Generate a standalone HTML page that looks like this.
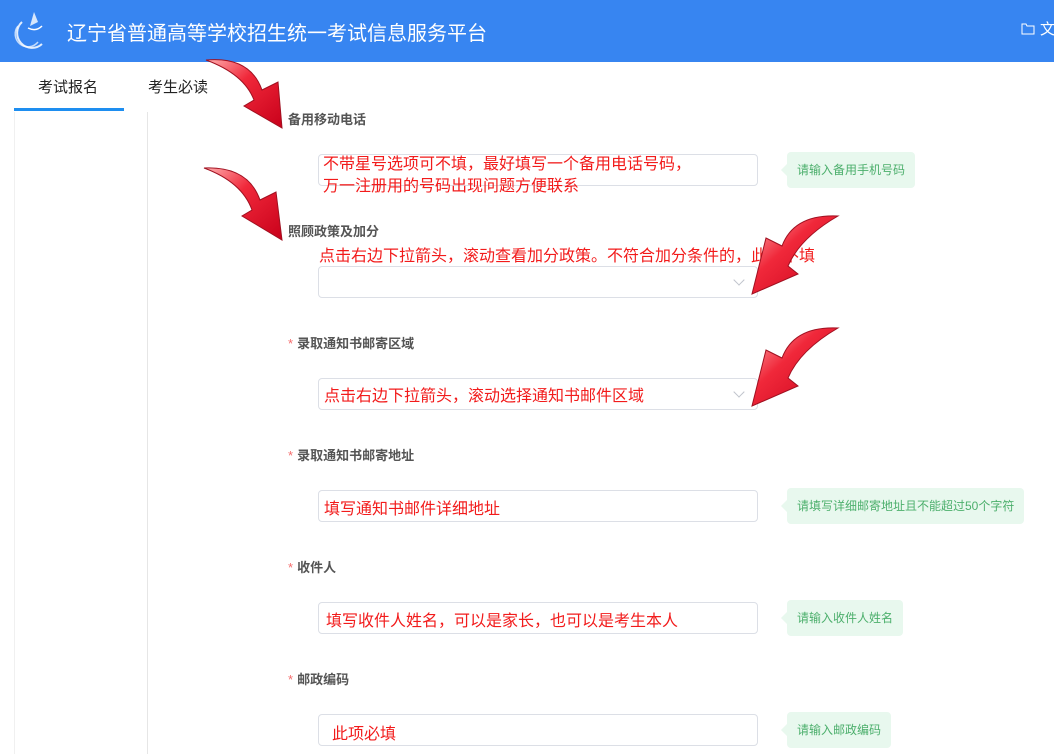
<!DOCTYPE html>
<html><head><meta charset="utf-8"><style>
*{margin:0;padding:0;box-sizing:border-box}
body{width:1054px;height:754px;overflow:hidden;background:#fff;font-family:"Liberation Sans","Noto Sans CJK SC",sans-serif;position:relative}
.hd{position:absolute;left:0;top:0;width:1054px;height:62px;background:#3785f1}
.title{position:absolute;left:67px;top:17px;color:#fff;font-size:20px}
.tab{position:absolute;top:76px;font-size:15px;color:#222}
.ul{position:absolute;left:14px;top:108px;width:110px;height:3px;background:#1e8ef0}
.vl{position:absolute;left:147px;top:112px;width:1px;height:642px;background:#e6e6e6}
.vl2{position:absolute;left:14px;top:112px;width:1px;height:642px;background:#f0f0f0}
.lab{position:absolute;left:288px;font-size:13px;color:#555;font-weight:bold}
.lab b{color:#f56c6c;font-weight:normal;margin-right:4px}
.inp{position:absolute;left:318px;width:440px;height:32px;border:1px solid #dcdfe6;border-radius:4px;background:#fff}
.red{position:absolute;color:#f21b1b;font-size:16px;white-space:nowrap}
.tip{position:absolute;left:787px;height:36px;background:#e8f8ee;color:#4caf6c;font-size:12px;line-height:36px;padding:0 10px;border-radius:4px}
.tip:before{content:"";position:absolute;left:-6px;top:12px;border:6px solid transparent;border-left:0;border-right-color:#e8f8ee}
.chev{position:absolute;left:735px;width:8px;height:8px;border-right:1px solid #c0c4cc;border-bottom:1px solid #c0c4cc;transform:rotate(45deg)}
</style></head><body>
<div class="hd">
<svg style="position:absolute;left:8px;top:8px" width="40" height="44" viewBox="0 0 40 44"><path d="M14 14 A13 13 0 1 0 34 36" stroke="#fff" stroke-width="2" fill="none" opacity=".85"/><path d="M10 18 A10 10 0 1 0 30 34" stroke="#fff" stroke-width="1.5" fill="none" opacity=".7"/><path d="M26 4 L22 18 L30 14 Z" fill="#fff" opacity=".8"/><path d="M20 20 Q28 24 34 18" stroke="#fff" stroke-width="1.5" fill="none"/></svg>
<div class="title">辽宁省普通高等学校招生统一考试信息服务平台</div>
<svg style="position:absolute;left:1021px;top:23px" width="14" height="12"><path d="M1 1h4l1 2h7v8H1z" stroke="#fff" fill="none"/></svg>
<div style="position:absolute;left:1040px;top:18px;color:#fff;font-size:15px">文</div>
</div>
<div class="tab" style="left:38px">考试报名</div>
<div class="tab" style="left:148px">考生必读</div>
<div class="ul"></div><div class="vl2"></div><div class="vl"></div>

<div class="lab" style="top:109px">备用移动电话</div>
<div class="inp" style="top:154px"></div>
<div class="red" style="left:323px;top:154px;line-height:22px">不带星号选项可不填，最好填写一个备用电话号码，<br>万一注册用的号码出现问题方便联系</div>
<div class="tip" style="top:152px">请输入备用手机号码</div>

<div class="lab" style="top:221px">照顾政策及加分</div>
<div class="red" style="left:319px;top:242px">点击右边下拉箭头，滚动查看加分政策。不符合加分条件的，此项不填</div>
<div class="inp" style="top:266px"></div><div class="chev" style="top:276px"></div>

<div class="lab" style="top:333px"><b>*</b>录取通知书邮寄区域</div>
<div class="inp" style="top:378px"></div><div class="chev" style="top:388px"></div>
<div class="red" style="left:324px;top:382px">点击右边下拉箭头，滚动选择通知书邮件区域</div>

<div class="lab" style="top:445px"><b>*</b>录取通知书邮寄地址</div>
<div class="inp" style="top:490px"></div>
<div class="red" style="left:324px;top:495px">填写通知书邮件详细地址</div>
<div class="tip" style="top:488px">请填写详细邮寄地址且不能超过50个字符</div>

<div class="lab" style="top:557px"><b>*</b>收件人</div>
<div class="inp" style="top:602px"></div>
<div class="red" style="left:326px;top:607px">填写收件人姓名，可以是家长，也可以是考生本人</div>
<div class="tip" style="top:600px">请输入收件人姓名</div>

<div class="lab" style="top:669px"><b>*</b>邮政编码</div>
<div class="inp" style="top:714px"></div>
<div class="red" style="left:332px;top:720px">此项必填</div>
<div class="tip" style="top:712px">请输入邮政编码</div>

<svg style="position:absolute;left:0;top:0" width="1054" height="754">
<defs><linearGradient id="g" x1="0" y1="0" x2="1" y2="1"><stop offset="0" stop-color="#ffb0b0"/><stop offset=".4" stop-color="#f0283a"/><stop offset="1" stop-color="#c8001a"/></linearGradient></defs>
<g fill="url(#g)" stroke="#a01020" stroke-width="1">
<path d="M206 60 Q250 56 262 90 L278 82 L282 128 L244 106 L254 100 Q244 74 206 60 Z"/>
<path d="M204 168 Q248 166 260 200 L276 192 L282 240 L242 216 L252 210 Q242 182 204 168 Z"/>
<path d="M838 216 Q794 214 782 246 L766 238 L752 294 L798 274 L788 266 Q800 238 838 216 Z"/>
<path d="M838 328 Q794 326 782 358 L766 350 L752 406 L798 386 L788 378 Q800 350 838 328 Z"/>
</g></svg>
</body></html>
